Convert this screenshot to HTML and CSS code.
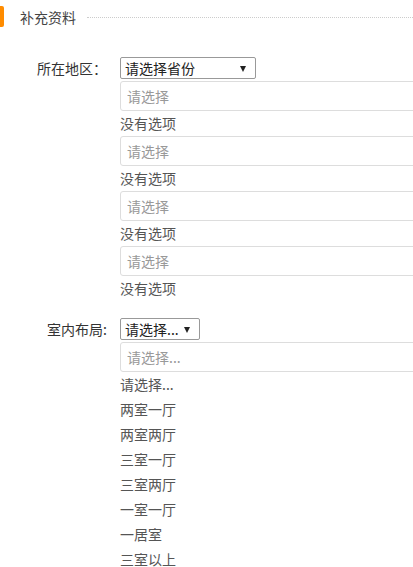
FILE: index.html
```html
<!DOCTYPE html>
<html lang="zh-CN">
<head>
    <meta charset="UTF-8">
    <meta name="viewport" content="width=device-width, initial-scale=1.0">
    <title>补充资料</title>
    <link rel="stylesheet" href="styles.css">
</head>
<body>
    <div class="section-title">
        <span class="title-text">补充资料</span>
        <span class="title-line"></span>
    </div>

    <div class="form-row">
        <label class="form-label">所在地区：</label>
        <div class="form-field">
            <div class="select-box province">请选择省份<span class="arrow"></span></div>
            <input class="search-input" type="text" placeholder="请选择">
            <div class="option">没有选项</div>
            <input class="search-input" type="text" placeholder="请选择">
            <div class="option">没有选项</div>
            <input class="search-input" type="text" placeholder="请选择">
            <div class="option">没有选项</div>
            <input class="search-input" type="text" placeholder="请选择">
            <div class="option">没有选项</div>
        </div>
    </div>

    <div class="form-row layout-row">
        <label class="form-label">室内布局:</label>
        <div class="form-field">
            <div class="select-box layout">请选择...<span class="arrow"></span></div>
            <input class="search-input" type="text" placeholder="请选择...">
            <div class="option">请选择...</div>
            <div class="option">两室一厅</div>
            <div class="option">两室两厅</div>
            <div class="option">三室一厅</div>
            <div class="option">三室两厅</div>
            <div class="option">一室一厅</div>
            <div class="option">一居室</div>
            <div class="option">三室以上</div>
        </div>
    </div>
</body>
</html>
```

FILE: styles.css
```css
html, body {
    overflow: hidden;
}

body {
    margin: 0;
    font-family: "Noto Sans CJK SC", "Liberation Sans", sans-serif;
    font-size: 14px;
    color: #333;
    background: #fff;
}

.section-title {
    display: flex;
    align-items: center;
    height: 34px;
    position: relative;
}

.section-title::before {
    content: "";
    position: absolute;
    left: 0;
    top: 6px;
    width: 4px;
    height: 21px;
    border-radius: 0 2px 2px 0;
    background: #ff8c00;
}

.title-text {
    margin-left: 20px;
    color: #444;
    line-height: 20px;
}

.title-line {
    flex: 1;
    margin-left: 11px;
    border-top: 1px dotted #ccc;
}

.form-row {
    display: flex;
    margin-top: 23px;
}

.layout-row {
    margin-top: 17px;
}

.form-label {
    width: 107px;
    margin-right: 13px;
    text-align: right;
    line-height: 22px;
    flex-shrink: 0;
}

.form-field {
    display: flex;
    flex-direction: column;
    align-items: flex-start;
}

.select-box {
    position: relative;
    box-sizing: border-box;
    height: 22px;
    line-height: 20px;
    padding-left: 4px;
    border: 1px solid #999;
    border-radius: 2px;
    color: #222;
    margin-bottom: 2px;
}

.province {
    width: 136px;
}

.layout {
    width: 80px;
}

.arrow {
    position: absolute;
    right: 9px;
    top: 8px;
    border-left: 3.5px solid transparent;
    border-right: 3.5px solid transparent;
    border-top: 6px solid #222;
}

.search-input {
    box-sizing: border-box;
    width: 320px;
    height: 30px;
    margin: 0;
    padding: 0 6px;
    border: 1px solid #ddd;
    border-radius: 3px;
    font-family: inherit;
    font-size: 14px;
    color: #333;
    outline: none;
}

.search-input::placeholder {
    color: #999;
}

.option {
    line-height: 25px;
    height: 25px;
    color: #555;
}
```
